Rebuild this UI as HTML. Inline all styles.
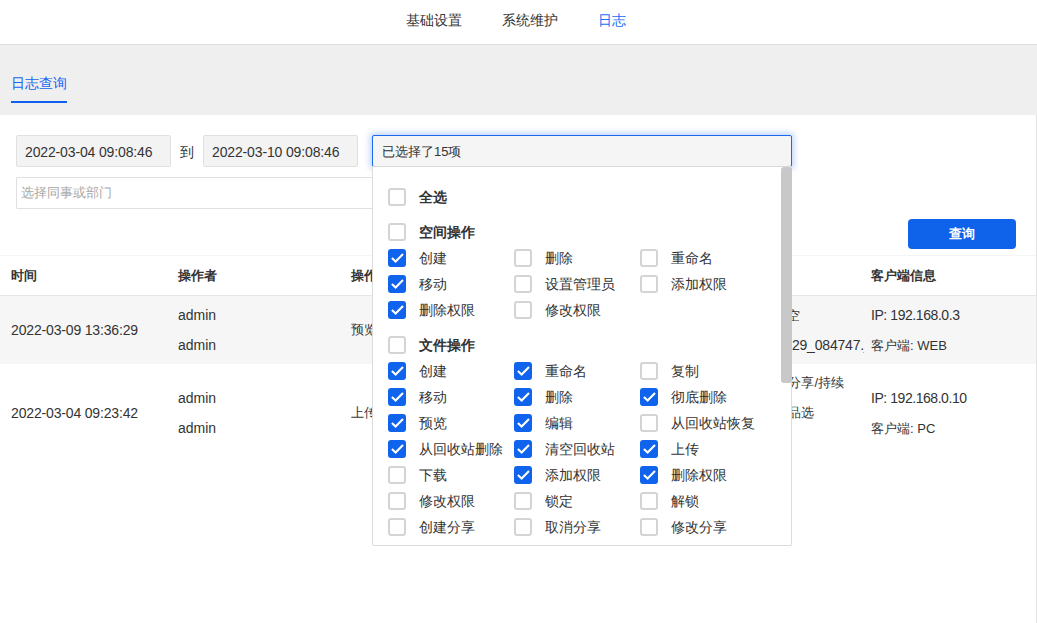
<!DOCTYPE html>
<html><head><meta charset="utf-8">
<style>
*{box-sizing:border-box}
html,body{margin:0;padding:0}
body{width:1037px;height:623px;overflow:hidden;position:relative;background:#fff;font-family:"Liberation Sans",sans-serif;font-size:14px;color:#333}
.a{position:absolute;white-space:nowrap}
.nav{left:0;top:0;width:1037px;height:45px;border-bottom:1px solid #dedede;background:#fff}
.nav .i{position:absolute;top:11px;line-height:18px;color:#333}
.band{left:0;top:45px;width:1037px;height:70px;background:#efefef}
.tab{left:11px;top:74px;line-height:18px;color:#1664f0}
.tabline{left:11px;top:101px;width:56px;height:2px;background:#1060f0}
.vline{left:1036px;top:115px;width:1px;height:508px;background:#e3e3e3}
.inp{height:32px;border:1px solid #e0e0e0;border-radius:2px;background:#f3f3f3;line-height:32px;padding-left:8px;color:#333;letter-spacing:-0.14px}
.sel{left:372px;top:135px;width:420px;height:32px;border:1px solid #1a68ee;border-radius:2px;background:#f5f5f5;line-height:32px;padding-left:9px;font-size:13px;box-shadow:0 0 6px 2px rgba(40,110,240,.3)}
.ph{left:16px;top:177px;width:360px;height:32px;border:1px solid #e0e0e0;border-right:none;border-radius:2px 0 0 2px;background:#fff;line-height:30px;padding-left:4px;color:#a8a8a8;font-size:13px}
.btn{left:908px;top:219px;width:108px;height:30px;border-radius:4px;background:#0f62ea;color:#fff;text-align:center;line-height:30px;font-weight:bold;font-size:13px}
.thead{left:0;top:255px;width:1036px;height:41px;border-top:1px solid #f5f5f5;border-bottom:1px solid #e6e6e6}
.th{font-weight:bold;top:267px;line-height:18px;font-size:13px}
.c{font-size:13px}
.row1{left:0;top:296px;width:1036px;height:68px;background:#f6f6f6}
.td{line-height:18px}
.dd{left:372px;top:166px;width:420px;height:380px;border:1px solid #dcdcdc;border-top:1px solid #d8d8d8;background:#fff;border-radius:0 0 2px 2px}
.sb{left:781px;top:167px;width:11px;height:216px;background:#c8c8c8;border-radius:3px}
.cb{position:absolute;width:18px;height:18px;border:2px solid #d4d4d4;border-radius:3px;background:#fff}
.cb.on{background:#1063ec;border-color:#1063ec}
.cb.on svg{position:absolute;left:-2px;top:-2px}
.lb{position:absolute;line-height:18px;color:#333;white-space:nowrap}
.lb.b{font-weight:bold}
</style></head><body>
<div class="a nav">
  <span class="i" style="left:406px">基础设置</span>
  <span class="i" style="left:502px">系统维护</span>
  <span class="i" style="left:598px;color:#1470f5">日志</span>
</div>
<div class="a band"></div>
<div class="a tab">日志查询</div>
<div class="a tabline"></div>
<div class="a vline"></div>

<div class="a inp" style="left:16px;top:135px;width:155px">2022-03-04 09:08:46</div>
<div class="a" style="left:180px;top:143px;line-height:18px">到</div>
<div class="a inp" style="left:203px;top:135px;width:155px">2022-03-10 09:08:46</div>
<div class="a ph">选择同事或部门</div>

<div class="a btn">查询</div>

<div class="a thead"></div>
<div class="a row1"></div>
<div class="a th" style="left:11px">时间</div>
<div class="a th" style="left:178px">操作者</div>
<div class="a th" style="left:351px">操作</div>
<div class="a th" style="left:871px">客户端信息</div>

<div class="a td" style="left:11px;top:321px;letter-spacing:-0.16px">2022-03-09 13:36:29</div>
<div class="a td" style="left:178px;top:306px">admin</div>
<div class="a td" style="left:178px;top:336px">admin</div>
<div class="a td c" style="left:351px;top:321px">预览</div>
<div class="a" style="left:690px;top:296px;width:174px;height:168px;overflow:hidden"><div class="a td c" style="right:64px;top:11px">2022-03-09上传/存储空</div><div class="a td" style="right:-18px;top:40px;letter-spacing:-0.2px">IMG_20220329_084747.jpg</div><div class="a td c" style="right:20px;top:78px">上传文件到分享/持续</div><div class="a td c" style="right:50px;top:108px">精品选</div></div>
<div class="a td" style="left:871px;top:306px;letter-spacing:-0.43px">IP: 192.168.0.3</div>
<div class="a td" style="left:871px;top:336px"><span class="c">客户端: WEB</span></div>

<div class="a td" style="left:11px;top:404px;letter-spacing:-0.16px">2022-03-04 09:23:42</div>
<div class="a td" style="left:178px;top:389px">admin</div>
<div class="a td" style="left:178px;top:419px">admin</div>
<div class="a td c" style="left:351px;top:404px">上传</div>
<div class="a td" style="left:871px;top:389px;letter-spacing:-0.45px">IP: 192.168.0.10</div>
<div class="a td" style="left:871px;top:419px"><span class="c">客户端: PC</span></div>

<div class="a sel">已选择了15项</div>
<div class="a dd" id="dd"></div>
<div id="ddc">
<div class="cb" style="left:388px;top:188px"></div>
<div class="lb b" style="left:419px;top:188px">全选</div>
<div class="cb" style="left:388px;top:223px"></div>
<div class="lb b" style="left:419px;top:223px">空间操作</div>
<div class="cb on" style="left:388px;top:249px"><svg width="18" height="18" viewBox="0 0 18 18"><path d="M3.9 9.1L7.6 12.6L15 5.1" fill="none" stroke="#fff" stroke-width="2.1"/></svg></div>
<div class="lb" style="left:419px;top:249px">创建</div>
<div class="cb" style="left:514px;top:249px"></div>
<div class="lb" style="left:545px;top:249px">删除</div>
<div class="cb" style="left:640px;top:249px"></div>
<div class="lb" style="left:671px;top:249px">重命名</div>
<div class="cb on" style="left:388px;top:275px"><svg width="18" height="18" viewBox="0 0 18 18"><path d="M3.9 9.1L7.6 12.6L15 5.1" fill="none" stroke="#fff" stroke-width="2.1"/></svg></div>
<div class="lb" style="left:419px;top:275px">移动</div>
<div class="cb" style="left:514px;top:275px"></div>
<div class="lb" style="left:545px;top:275px">设置管理员</div>
<div class="cb" style="left:640px;top:275px"></div>
<div class="lb" style="left:671px;top:275px">添加权限</div>
<div class="cb on" style="left:388px;top:301px"><svg width="18" height="18" viewBox="0 0 18 18"><path d="M3.9 9.1L7.6 12.6L15 5.1" fill="none" stroke="#fff" stroke-width="2.1"/></svg></div>
<div class="lb" style="left:419px;top:301px">删除权限</div>
<div class="cb" style="left:514px;top:301px"></div>
<div class="lb" style="left:545px;top:301px">修改权限</div>
<div class="cb" style="left:388px;top:336px"></div>
<div class="lb b" style="left:419px;top:336px">文件操作</div>
<div class="cb on" style="left:388px;top:362px"><svg width="18" height="18" viewBox="0 0 18 18"><path d="M3.9 9.1L7.6 12.6L15 5.1" fill="none" stroke="#fff" stroke-width="2.1"/></svg></div>
<div class="lb" style="left:419px;top:362px">创建</div>
<div class="cb on" style="left:514px;top:362px"><svg width="18" height="18" viewBox="0 0 18 18"><path d="M3.9 9.1L7.6 12.6L15 5.1" fill="none" stroke="#fff" stroke-width="2.1"/></svg></div>
<div class="lb" style="left:545px;top:362px">重命名</div>
<div class="cb" style="left:640px;top:362px"></div>
<div class="lb" style="left:671px;top:362px">复制</div>
<div class="cb on" style="left:388px;top:388px"><svg width="18" height="18" viewBox="0 0 18 18"><path d="M3.9 9.1L7.6 12.6L15 5.1" fill="none" stroke="#fff" stroke-width="2.1"/></svg></div>
<div class="lb" style="left:419px;top:388px">移动</div>
<div class="cb on" style="left:514px;top:388px"><svg width="18" height="18" viewBox="0 0 18 18"><path d="M3.9 9.1L7.6 12.6L15 5.1" fill="none" stroke="#fff" stroke-width="2.1"/></svg></div>
<div class="lb" style="left:545px;top:388px">删除</div>
<div class="cb on" style="left:640px;top:388px"><svg width="18" height="18" viewBox="0 0 18 18"><path d="M3.9 9.1L7.6 12.6L15 5.1" fill="none" stroke="#fff" stroke-width="2.1"/></svg></div>
<div class="lb" style="left:671px;top:388px">彻底删除</div>
<div class="cb on" style="left:388px;top:414px"><svg width="18" height="18" viewBox="0 0 18 18"><path d="M3.9 9.1L7.6 12.6L15 5.1" fill="none" stroke="#fff" stroke-width="2.1"/></svg></div>
<div class="lb" style="left:419px;top:414px">预览</div>
<div class="cb on" style="left:514px;top:414px"><svg width="18" height="18" viewBox="0 0 18 18"><path d="M3.9 9.1L7.6 12.6L15 5.1" fill="none" stroke="#fff" stroke-width="2.1"/></svg></div>
<div class="lb" style="left:545px;top:414px">编辑</div>
<div class="cb" style="left:640px;top:414px"></div>
<div class="lb" style="left:671px;top:414px">从回收站恢复</div>
<div class="cb on" style="left:388px;top:440px"><svg width="18" height="18" viewBox="0 0 18 18"><path d="M3.9 9.1L7.6 12.6L15 5.1" fill="none" stroke="#fff" stroke-width="2.1"/></svg></div>
<div class="lb" style="left:419px;top:440px">从回收站删除</div>
<div class="cb on" style="left:514px;top:440px"><svg width="18" height="18" viewBox="0 0 18 18"><path d="M3.9 9.1L7.6 12.6L15 5.1" fill="none" stroke="#fff" stroke-width="2.1"/></svg></div>
<div class="lb" style="left:545px;top:440px">清空回收站</div>
<div class="cb on" style="left:640px;top:440px"><svg width="18" height="18" viewBox="0 0 18 18"><path d="M3.9 9.1L7.6 12.6L15 5.1" fill="none" stroke="#fff" stroke-width="2.1"/></svg></div>
<div class="lb" style="left:671px;top:440px">上传</div>
<div class="cb" style="left:388px;top:466px"></div>
<div class="lb" style="left:419px;top:466px">下载</div>
<div class="cb on" style="left:514px;top:466px"><svg width="18" height="18" viewBox="0 0 18 18"><path d="M3.9 9.1L7.6 12.6L15 5.1" fill="none" stroke="#fff" stroke-width="2.1"/></svg></div>
<div class="lb" style="left:545px;top:466px">添加权限</div>
<div class="cb on" style="left:640px;top:466px"><svg width="18" height="18" viewBox="0 0 18 18"><path d="M3.9 9.1L7.6 12.6L15 5.1" fill="none" stroke="#fff" stroke-width="2.1"/></svg></div>
<div class="lb" style="left:671px;top:466px">删除权限</div>
<div class="cb" style="left:388px;top:492px"></div>
<div class="lb" style="left:419px;top:492px">修改权限</div>
<div class="cb" style="left:514px;top:492px"></div>
<div class="lb" style="left:545px;top:492px">锁定</div>
<div class="cb" style="left:640px;top:492px"></div>
<div class="lb" style="left:671px;top:492px">解锁</div>
<div class="cb" style="left:388px;top:518px"></div>
<div class="lb" style="left:419px;top:518px">创建分享</div>
<div class="cb" style="left:514px;top:518px"></div>
<div class="lb" style="left:545px;top:518px">取消分享</div>
<div class="cb" style="left:640px;top:518px"></div>
<div class="lb" style="left:671px;top:518px">修改分享</div>
</div>
<div class="a sb"></div>
</body></html>
